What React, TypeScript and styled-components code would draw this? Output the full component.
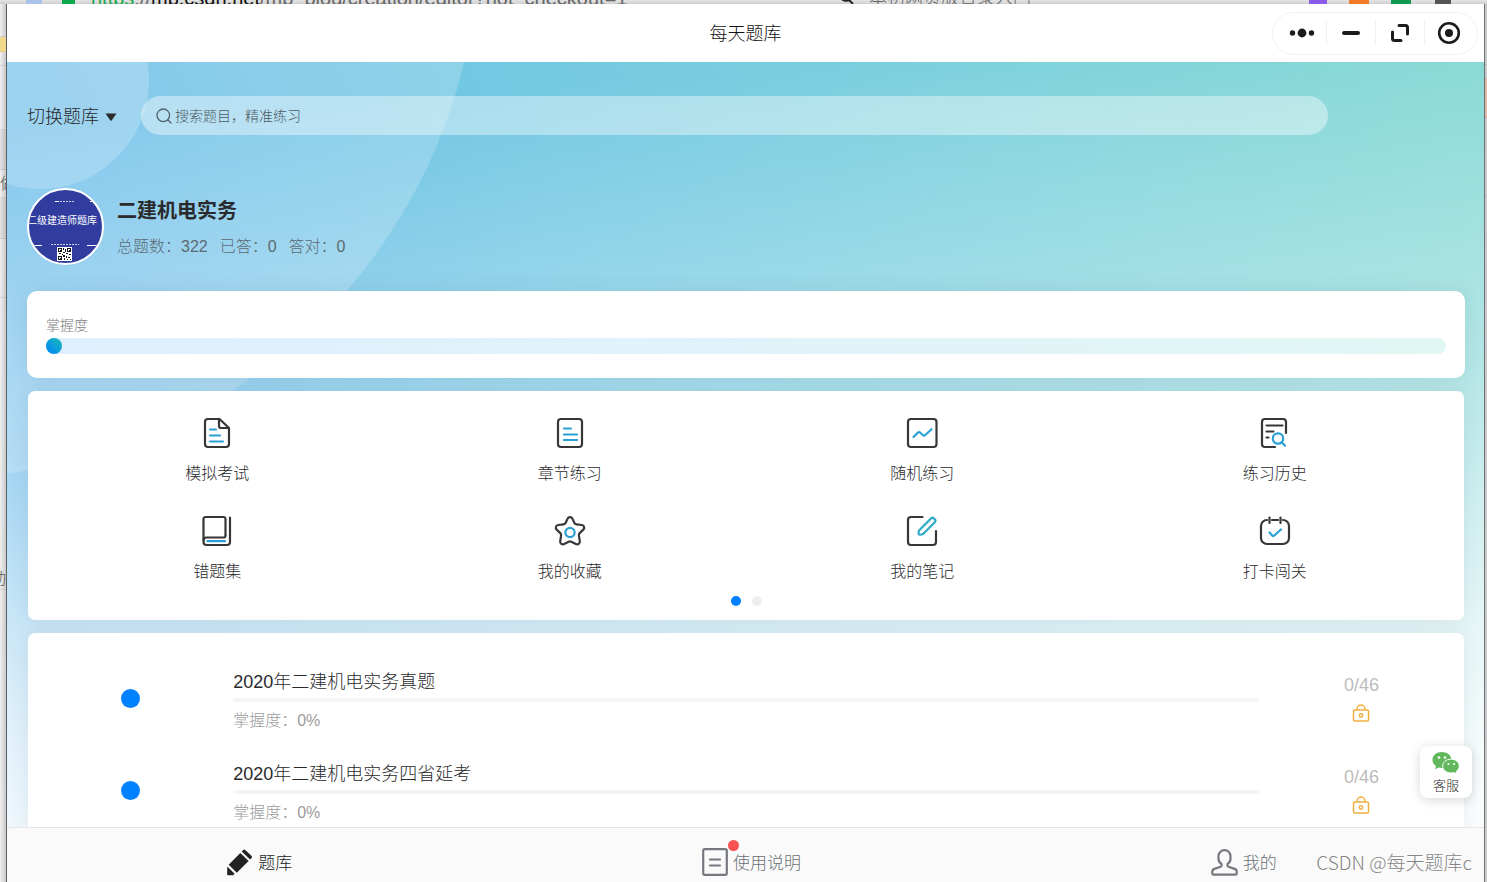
import React from "react";
import styled, { createGlobalStyle } from "styled-components";

const Global = createGlobalStyle`
  * { box-sizing: border-box; }
  body {
    margin: 0;
    font-family: "Liberation Sans", "Noto Sans CJK SC", sans-serif;
    font-weight: 300;
    color: #2a2a2c;
  }
  button { border: 0; background: none; padding: 0; margin: 0; font: inherit; color: inherit; cursor: pointer; }
  a { color: inherit; text-decoration: none; }
  svg { display: block; flex: none; }
  h1, h2, h3, p, ul { margin: 0; padding: 0; font-weight: inherit; }
  ul { list-style: none; }
`;

/* ---------- desktop behind the window ---------- */

const Desktop = styled.div`
  height: 100vh;
  display: grid;
  grid-template: 4px minmax(0, 1fr) / 7px minmax(0, 1fr) 3px;
  background: #e9e9e9;
`;

const BrowserStrip = styled.div`
  grid-column: 1 / -1;
  height: 4px;
  overflow: hidden;
  display: flex;
  align-items: flex-end;
  background: linear-gradient(#e4e4e4, #cfcfcf);
  line-height: 12px;
  font-size: 20px;
  color: #666;
  white-space: nowrap;
`;

const StripBlock = styled.span<{ $w: number; $c: string; $ml: number }>`
  flex: none;
  width: ${(p) => p.$w}px;
  height: 4px;
  margin-left: ${(p) => p.$ml}px;
  background: ${(p) => p.$c};
`;

const Address = styled.span`
  margin-left: 16px;
  width: 748px;
  flex: none;
  b { font-weight: 400; color: #111; }
  i { font-style: normal; color: #18a84c; }
`;

const Query = styled.span`
  width: 398px;
  margin-left: 14px;
  flex: none;
  font-size: 18px;
`;

const LeftEdge = styled.div`
  overflow: hidden;
  border-right: 1px solid #5c6064;
  background: linear-gradient(90deg, #f0f0f0, #c9c9c9);
`;

const RightEdge = styled.div`
  overflow: hidden;
  border-left: 1px solid #6d7072;
  background: #cacaca;
`;

const EdgePiece = styled.div<{ $h: number; $c?: string; $end?: boolean }>`
  height: ${(p) => p.$h}px;
  background: ${(p) => p.$c ?? "transparent"};
  border-bottom: 1px solid rgba(0, 0, 0, 0.08);
  overflow: hidden;
  display: flex;
  align-items: ${(p) => (p.$end ? "flex-end" : "center")};
  justify-content: ${(p) => (p.$end ? "flex-end" : "flex-start")};
  font-size: 16px;
  line-height: 20px;
  color: #555;
`;

/* ---------- window ---------- */

const Window = styled.div`
  display: flex;
  flex-direction: column;
  min-width: 0;
  min-height: 0;
  background: #fff;
`;

const TitleBar = styled.header`
  height: 58px;
  flex: none;
  display: grid;
  grid-template-columns: 1fr auto 1fr;
  align-items: center;
  padding: 0 6px;
  background: #fff;
`;

const AppTitle = styled.h1`
  grid-column: 2;
  padding-top: 2px;
  font-size: 18px;
  line-height: 26px;
  color: #111;
`;

const Capsule = styled.div`
  justify-self: end;
  display: flex;
  align-items: center;
  height: 43px;
  padding: 0 4px;
  border: 1px solid #f1f1f1;
  border-radius: 22px;
`;

const CapsuleButton = styled.button`
  width: 49px;
  height: 24px;
  display: flex;
  align-items: center;
  justify-content: center;
  & + & { border-left: 1px solid #efefef; }
`;

const Stage = styled.div`
  position: relative;
  flex: 1;
  min-height: 0;
  overflow: hidden;
  display: flex;
  isolation: isolate;
  background:
    linear-gradient(176deg,
      rgba(255, 255, 255, 0) 7%, rgba(255, 255, 255, 0.26) 31%,
      rgba(255, 255, 255, 0.4) 46%, rgba(255, 255, 255, 0.6) 60%,
      rgba(255, 255, 255, 0.8) 76%, rgba(255, 255, 255, 0.97) 95%),
    linear-gradient(65deg, #62b6ea 0%, #66bbe9 20%, #73c8e3 45%, #7dd2db 75%, #84d8d4 100%);
`;

const Content = styled.main`
  flex: 1;
  min-width: 0;
  display: flex;
  flex-direction: column;
  padding: 34px 19px 0 20px;
  overflow-y: auto;
  scrollbar-width: none;
  & > * { flex: none; }
`;

const Bubble = styled.span<{ $x: number; $y: number; $r: number }>`
  position: absolute;
  z-index: -1;
  left: ${(p) => p.$x - p.$r}px;
  top: ${(p) => p.$y - p.$r}px;
  width: ${(p) => p.$r * 2}px;
  height: ${(p) => p.$r * 2}px;
  border-radius: 50%;
  background: rgba(255, 255, 255, 0.2);
`;

const SearchRow = styled.div`
  display: flex;
  align-items: center;
  gap: 24px;
  padding-right: 137px;
`;

const BankSwitch = styled.button`
  display: flex;
  align-items: center;
  gap: 6px;
  padding-top: 2px;
  font-size: 18px;
  line-height: 26px;
  white-space: nowrap;
`;

const SearchBox = styled.label`
  flex: 1;
  height: 39px;
  display: flex;
  align-items: center;
  gap: 3px;
  padding: 0 15px;
  border-radius: 20px;
  background: rgba(255, 255, 255, 0.4);
  color: #52626a;
`;

const SearchInput = styled.input`
  flex: 1;
  min-width: 0;
  border: 0;
  padding: 0;
  outline: 0;
  background: transparent;
  font: inherit;
  font-size: 14px;
  line-height: 20px;
  color: #333;
  &::placeholder { color: #4c5a62; opacity: 1; }
`;

const Profile = styled.section`
  display: flex;
  align-items: center;
  gap: 13px;
  margin: 53px 0 26px;
`;

const Avatar = styled.div`
  width: 77px;
  height: 77px;
  border: 2px solid #fff;
  border-radius: 50%;
  overflow: hidden;
  background: #303d9f;
`;

const ProfileText = styled.div`
  display: flex;
  flex-direction: column;
  gap: 10px;
  padding-top: 2px;
`;

const BankName = styled.h2`
  font-size: 20px;
  line-height: 28px;
  font-weight: 700;
`;

const Stats = styled.p`
  display: flex;
  gap: 12px;
  font-size: 16px;
  line-height: 24px;
  color: #5c6a72;
`;

const Card = styled.section`
  background: #fff;
  border-radius: 7px;
  box-shadow: 0 0 20px rgba(40, 80, 110, 0.1);
  margin: 0 1px 13px;
`;

const MasteryCard = styled(Card)`
  margin: 0 0 13px;
  padding: 24px 19px;
  border-radius: 10px;
`;

const MasteryLabel = styled.p`
  font-size: 14px;
  line-height: 20px;
  margin-bottom: 3px;
  color: #7c7c7c;
`;

const MasteryTrack = styled.div`
  height: 16px;
  border-radius: 8px;
  background: linear-gradient(90deg, #e0efff, #e1f7f4);
`;

const MasteryFill = styled.div`
  width: 16px;
  height: 16px;
  border-radius: 8px;
  background: linear-gradient(45deg, #0081ff, #1cbbb4);
`;

const MenuCard = styled(Card)`
  padding: 26px 13px 14px;
`;

const MenuGrid = styled.nav`
  display: grid;
  grid-template-columns: repeat(4, 1fr);
  row-gap: 29px;
`;

const MenuItem = styled.a`
  display: flex;
  flex-direction: column;
  align-items: center;
  gap: 13px;
  font-size: 16px;
  line-height: 24px;
`;

const Pager = styled.div`
  display: flex;
  justify-content: center;
  gap: 11px;
  margin-top: 12px;
`;

const PagerDot = styled.button<{ $on?: boolean }>`
  width: 10px;
  height: 10px;
  border-radius: 5px;
  background: ${(p) => (p.$on ? "#0081ff" : "#eee")};
`;

const ListCard = styled(Card)`
  flex: 1 0 auto;
  margin-bottom: 0;
  padding-top: 19px;
  border-radius: 7px 7px 0 0;
`;

const PaperRow = styled.li`
  height: 92px;
  display: grid;
  grid-template-columns: 1fr 5fr 1fr;
  align-items: center;
`;

const Bullet = styled.span`
  justify-self: center;
  width: 19px;
  height: 19px;
  border-radius: 50%;
  background: #0081ff;
`;

const PaperBody = styled.div`
  padding-top: 5px;
`;

const PaperTitle = styled.h3`
  font-size: 18px;
  line-height: 28px;
`;

const PaperTrack = styled.div`
  height: 4px;
  margin: 2px 0 7px;
  border-radius: 2px;
  background: #f5f5f5;
`;

const PaperMastery = styled.p`
  font-size: 16px;
  line-height: 24px;
  color: #9c9c9c;
`;

const PaperSide = styled.div`
  display: flex;
  flex-direction: column;
  align-items: center;
  gap: 9px;
  font-size: 18px;
  line-height: 20px;
  color: #bbb;
`;

const Support = styled.button`
  position: absolute;
  right: 12px;
  bottom: 29px;
  width: 52px;
  height: 52px;
  display: flex;
  flex-direction: column;
  align-items: center;
  gap: 2px;
  padding-top: 6px;
  border-radius: 8px;
  background: #fff;
  box-shadow: 0 2px 12px rgba(0, 0, 0, 0.16);
  font-size: 13px;
  line-height: 20px;
`;

const TabBar = styled.nav`
  position: relative;
  flex: none;
  height: 55px;
  display: grid;
  grid-template-columns: repeat(3, 1fr);
  padding-top: 16px;
  border-top: 1px solid #e6e6e8;
  background: #fafafa;
`;

const Tab = styled.a<{ $on?: boolean }>`
  height: 36px;
  display: flex;
  align-items: center;
  justify-content: center;
  gap: 5px;
  padding-left: 12px;
  font-size: 17px;
  line-height: 24px;
  color: ${(p) => (p.$on ? "#222" : "#6c7076")};
`;

const TabLabel = styled.span`
  padding-top: 4px;
`;

const TabIcon = styled.span`
  position: relative;
`;

const Badge = styled.span`
  position: absolute;
  top: -8px;
  right: -11px;
  width: 11px;
  height: 11px;
  border-radius: 50%;
  background: #fa5151;
`;

const Watermark = styled.span`
  position: absolute;
  right: 12px;
  bottom: 6px;
  font-family: "Noto Sans CJK SC", sans-serif;
  font-size: 19px;
  line-height: 28px;
  color: #858585;
  text-shadow: 1px 1px 0 #fff;
`;

/* ---------- icons ---------- */

const INK = "#37373a";
const BLUE = "#2a9fd6";

const MenuSvg = ({ children }: { children: React.ReactNode }) => (
  <svg width="32" height="32" viewBox="0 0 32 32" fill="none" stroke={INK} strokeWidth="2.2" strokeLinecap="round" strokeLinejoin="round" aria-hidden="true">
    {children}
  </svg>
);

const menu: { label: string; icon: React.ReactNode }[] = [
  {
    label: "模拟考试",
    icon: (
      <MenuSvg>
        <path d="M18.500 2H7a3 3 0 0 0-3 3v22a3 3 0 0 0 3 3h18a3 3 0 0 0 3-3V11z" />
        <path d="M18 2.500V9a2 2 0 0 0 2 2h7.500" />
        <path stroke={BLUE} d="M9 12.500h6M9 18.500h10M9 24.500h13" />
      </MenuSvg>
    ),
  },
  {
    label: "章节练习",
    icon: (
      <MenuSvg>
        <rect x="4" y="2" width="24" height="28" rx="3" />
        <path stroke={BLUE} d="M10 11.500h7M10 17.500h13M10 23h13" />
      </MenuSvg>
    ),
  },
  {
    label: "随机练习",
    icon: (
      <MenuSvg>
        <rect x="2" y="2" width="28.500" height="28" rx="3" />
        <path stroke={BLUE} d="M7.500 20l4.500-4.500a1.500 1.500 0 0 1 2 0l3 2.700a1.500 1.500 0 0 0 2 0l6.500-6" />
      </MenuSvg>
    ),
  },
  {
    label: "练习历史",
    icon: (
      <MenuSvg>
        <path d="M16 30H6a3 3 0 0 1-3-3V5a3 3 0 0 1 3-3h18a3 3 0 0 1 3 3v11" />
        <path d="M7.500 8.500h16M7.500 14.500h7M7.500 20.500h2" />
        <circle cx="19" cy="21.500" r="5.200" stroke={BLUE} />
        <path stroke={BLUE} d="M22.500 25l3.500 3.700" />
      </MenuSvg>
    ),
  },
  {
    label: "错题集",
    icon: (
      <MenuSvg>
        <path d="M24.500 20V4a2 2 0 0 0-2-2H4.500a2 2 0 0 0-2 2v23a3 3 0 0 0 3 3H26a3 3 0 0 0 3-3V2.500" />
        <path d="M2.500 25a3 3 0 0 1 3-2.500h17a2 2 0 0 0 2-2" />
        <path stroke={BLUE} d="M6.500 26.200h17.500" />
      </MenuSvg>
    ),
  },
  {
    label: "我的收藏",
    icon: (
      <MenuSvg>
        <path d="M13.600 3.600c1-2.100 3.800-2.100 4.800 0l1.900 4.200c.4.900 1.200 1.500 2.200 1.600l5.300.6c2.300.3 3.200 3 1.500 4.600l-3.600 3.500c-.7.700-1 1.600-.8 2.500l.9 5.600c.4 2.300-1.900 3.900-3.900 2.900l-4.600-2.400c-.8-.4-1.800-.4-2.600 0l-4.600 2.400c-2 1-4.300-.6-3.900-2.900l.9-5.600c.2-.9-.1-1.800-.8-2.500l-3.600-3.500C1 13 1.900 10.300 4.200 10l5.300-.6c1-.1 1.800-.7 2.200-1.600z" />
        <circle cx="16" cy="17.500" r="4.600" stroke={BLUE} />
      </MenuSvg>
    ),
  },
  {
    label: "我的笔记",
    icon: (
      <MenuSvg>
        <path d="M16.500 2H5a3 3 0 0 0-3 3V27a3 3 0 0 0 3 3h22a3 3 0 0 0 3-3V16" />
        <path stroke="#2fa9c8" d="M14 14.500L25 3.400a2 2 0 0 1 2.800 0l1 1a2 2 0 0 1 0 2.800L17.600 18.500c-.6.6-1.300.9-2.100 1l-1.500.1c-1 .1-1.700-.6-1.500-1.600l.2-1.400c.1-.8.600-1.500 1.300-2.100z" />
      </MenuSvg>
    ),
  },
  {
    label: "打卡闯关",
    icon: (
      <MenuSvg>
        <path d="M8 5a6 6 0 0 0-6 6v12a6 6 0 0 0 6 6h16a6 6 0 0 0 6-6V11a6 6 0 0 0-6-6M13 5h6M10.500 2.500v5.500M21.500 2.500v5.500" />
        <path stroke={BLUE} d="M10.500 17.500l3 3.200c.5.400 1 .4 1.500 0l7-6.200" />
      </MenuSvg>
    ),
  },
];

const LockIcon = () => (
  <svg width="18" height="18" viewBox="0 0 18 18" fill="none" stroke="#f0b040" strokeWidth="1.500" aria-hidden="true">
    <rect x="1.500" y="6" width="15" height="11" rx="1.200" />
    <path d="M5 6V5a4 4 0 0 1 8 0v1" />
    <circle cx="9" cy="11.500" r="1.700" />
  </svg>
);

const AvatarArt = () => (
  <svg width="73" height="73" viewBox="0 0 73 73" role="img" aria-label="二级建造师题库">
    <text x="-2" y="34" fontSize="10" fill="#fff" fontWeight="400">二级建造师题库</text>
    <path stroke="#fff" strokeWidth="1" fill="none" d="M0 55.500h13M58 55.500h14M26 11.500h4M61 11.500h4" />
    <path stroke="#c9cdf0" strokeWidth="1" strokeDasharray="2 1" fill="none" d="M31 11.500h15M22 54.500h28" />
    <rect x="28" y="57" width="15" height="14" fill="#fff" />
    <path
      fill="#15151c"
      d="M29 58h4v4h-4zM38 58h4v4h-4zM29 66h4v4h-4zM34 58h1v2h-1zM36 59h1v3h-1zM34 62h2v1h-2zM30 63h2v1h-2zM37 63h2v1h-2zM40 64h2v1h-2zM34 65h2v2h-2zM37 66h1v2h-1zM39 67h2v1h-2zM35 68h1v2h-1zM38 69h1v1h-1zM41 69h1v1h-1zM33 64h1v1h-1z"
    />
    <path fill="#fff" d="M30 59h2v2h-2zM39 59h2v2h-2zM30 67h2v2h-2z" />
    <path fill="#15151c" d="M31 60h1v1h-1zM40 60h1v1h-1zM31 68h1v1h-1z" />
  </svg>
);

const WechatIcon = () => (
  <svg width="28" height="22" viewBox="0 0 28 22" aria-hidden="true">
    <path fill="#62b85c" d="M10 0C4.500 0 .5 3.500.5 8c0 2.600 1.400 4.800 3.500 6.200L3 17.300l3.600-1.900c1.100.3 2.200.5 3.400.5C15.500 15.900 19.500 12.400 19.500 8S15.500 0 10 0z" />
    <path fill="#62b85c" stroke="#fff" strokeWidth="1" d="M19 7.200c-4.800 0-8.300 3-8.300 6.900s3.500 6.900 8.300 6.900c1 0 2-.1 2.900-.4l3.100 1.400-.8-2.500c1.900-1.300 3.100-3.200 3.100-5.400 0-3.900-3.500-6.900-8.300-6.900z" />
    <g fill="#fff">
      <circle cx="7" cy="5.500" r="1.300" />
      <circle cx="13" cy="5.500" r="1.300" />
      <circle cx="16.500" cy="12" r="1.100" />
      <circle cx="22" cy="12" r="1.100" />
    </g>
  </svg>
);

const papers = [
  { title: "2020年二建机电实务真题", mastery: 0, done: 0, total: 46 },
  { title: "2020年二建机电实务四省延考", mastery: 0, done: 0, total: 46 },
];

export default function App() {
  return (
    <>
      <Global />
      <Desktop>
        <BrowserStrip>
          <StripBlock $w={16} $c="#a9c3ea" $ml={26} />
          <StripBlock $w={13} $c="#0da84e" $ml={20} />
          <Address>
            <i>https</i>://<b>mp.csdn.net</b>/mp_blog/creation/editor?not_checkout=1
          </Address>
          <svg width="16" height="4" viewBox="0 0 16 4" fill="none" stroke="#222" strokeWidth="2">
            <path d="M2 -2a6 6 0 0 0 8 2l4 4" />
          </svg>
          <Query>本初网页版合录入门</Query>
          <StripBlock $w={18} $c="#8a5be8" $ml={42} />
          <StripBlock $w={20} $c="#f27b2a" $ml={22} />
          <StripBlock $w={20} $c="#0f9a50" $ml={22} />
          <StripBlock $w={16} $c="#555" $ml={24} />
        </BrowserStrip>

        <LeftEdge aria-hidden="true">
          <EdgePiece $h={33} />
          <EdgePiece $h={15} $c="#f3d98c" />
          <EdgePiece $h={14} />
          <EdgePiece $h={64} />
          <EdgePiece $h={40} $c="rgba(0,0,0,0.05)" />
          <EdgePiece $h={28}>做</EdgePiece>
          <EdgePiece $h={41} $c="rgba(0,0,0,0.05)" />
          <EdgePiece $h={59} />
          <EdgePiece $h={292} $end>动</EdgePiece>
        </LeftEdge>

        <Window>
          <TitleBar>
            <AppTitle>每天题库</AppTitle>
            <Capsule>
              <CapsuleButton aria-label="更多">
                <svg width="26" height="10" viewBox="0 0 26 10" fill="#1b1b1b">
                  <circle cx="3.500" cy="5" r="2.700" />
                  <circle cx="13" cy="5" r="4.400" />
                  <circle cx="22.500" cy="5" r="2.700" />
                </svg>
              </CapsuleButton>
              <CapsuleButton aria-label="最小化">
                <svg width="20" height="4" viewBox="0 0 20 4">
                  <rect x="1" width="18" height="4" rx="2" fill="#1b1b1b" />
                </svg>
              </CapsuleButton>
              <CapsuleButton aria-label="最大化">
                <svg width="20" height="20" viewBox="0 0 20 20" fill="none" stroke="#1b1b1b" strokeWidth="3" strokeLinecap="round" strokeLinejoin="round">
                  <path d="M9 2.500h6.500a2 2 0 0 1 2 2V11M2.500 9v6.500a2 2 0 0 0 2 2H11" />
                </svg>
              </CapsuleButton>
              <CapsuleButton aria-label="关闭">
                <svg width="24" height="24" viewBox="0 0 24 24">
                  <circle cx="12" cy="12" r="9.800" fill="none" stroke="#1b1b1b" strokeWidth="2.600" />
                  <circle cx="12" cy="12" r="4" fill="#1b1b1b" />
                </svg>
              </CapsuleButton>
            </Capsule>
          </TitleBar>

          <Stage>
            <Bubble $x={-70} $y={-126} $r={542} />
            <Bubble $x={33} $y={18} $r={109} />
            <Content>
              <SearchRow>
                <BankSwitch>
                  切换题库
                  <svg width="12" height="8" viewBox="0 0 12 8" fill="#2c2c2c">
                    <path d="M0.500 0.500h11L6.600 7.500a.8.8 0 0 1-1.200 0z" />
                  </svg>
                </BankSwitch>
                <SearchBox>
                  <svg width="16" height="16" viewBox="0 0 16 16" fill="none" stroke="currentColor" strokeWidth="1.300" strokeLinecap="round">
                    <circle cx="7.300" cy="7.300" r="6.300" />
                    <path d="M12 12l3 3" />
                  </svg>
                  <SearchInput type="search" aria-label="搜索题目" placeholder="搜索题目，精准练习" />
                </SearchBox>
              </SearchRow>

              <Profile>
                <Avatar>
                  <AvatarArt />
                </Avatar>
                <ProfileText>
                  <BankName>二建机电实务</BankName>
                  <Stats>
                    <span>总题数：322</span>
                    <span>已答：0</span>
                    <span>答对：0</span>
                  </Stats>
                </ProfileText>
              </Profile>

              <MasteryCard>
                <MasteryLabel id="mastery">掌握度</MasteryLabel>
                <MasteryTrack role="progressbar" aria-labelledby="mastery" aria-valuenow={0}>
                  <MasteryFill />
                </MasteryTrack>
              </MasteryCard>

              <MenuCard>
                <MenuGrid>
                  {menu.map((m) => (
                    <MenuItem href="#" key={m.label}>
                      {m.icon}
                      <span>{m.label}</span>
                    </MenuItem>
                  ))}
                </MenuGrid>
                <Pager>
                  <PagerDot $on aria-label="第1页" />
                  <PagerDot aria-label="第2页" />
                </Pager>
              </MenuCard>

              <ListCard>
                <ul>
                  {papers.map((p) => (
                    <PaperRow key={p.title}>
                      <Bullet />
                      <PaperBody>
                        <PaperTitle>{p.title}</PaperTitle>
                        <PaperTrack />
                        <PaperMastery>掌握度：{p.mastery}%</PaperMastery>
                      </PaperBody>
                      <PaperSide>
                        <span>{p.done}/{p.total}</span>
                        <LockIcon />
                      </PaperSide>
                    </PaperRow>
                  ))}
                </ul>
              </ListCard>
            </Content>

            <Support>
              <WechatIcon />
              客服
            </Support>
          </Stage>

          <TabBar>
            <Tab href="#" $on>
              <svg width="27" height="27" viewBox="0 0 27 27" fill="#222">
                <path d="M17 1.200a1.800 1.800 0 0 1 2.500 0l5.900 5.600a1.800 1.800 0 0 1 0 2.500l-1.300 1.300-8.400-8z" />
                <path d="M14.300 4l8.300 8L10.800 23.700 2.700 15.700z" />
                <path d="M1.300 17.600l7.300 7.200-1.600 1.400H2.300a1.200 1.200 0 0 1-1.200-1.200z" />
              </svg>
              <TabLabel>题库</TabLabel>
            </Tab>
            <Tab href="#">
              <TabIcon>
                <svg width="26" height="28" viewBox="0 0 26 28" fill="none" stroke="#75797f" strokeWidth="2.200" strokeLinecap="round">
                  <rect x="1.200" y="1.200" width="23.600" height="25.600" rx="1.500" />
                  <path d="M8 11.500h10M8 17.500h10" />
                </svg>
                <Badge />
              </TabIcon>
              <TabLabel>使用说明</TabLabel>
            </Tab>
            <Tab href="#">
              <svg width="27" height="27" viewBox="0 0 27 27" fill="none" stroke="#75797f" strokeWidth="2.200" strokeLinejoin="round">
                <path d="M13.500 1.200a6 6 0 0 0-6 6.200v2c0 2.600 1.300 4.500 3 5.600v1.600c0 .6-.4 1-.9 1.200l-6.200 2.100a3 3 0 0 0-2.100 2.900v1.600a1.200 1.200 0 0 0 1.200 1.200h22a1.200 1.200 0 0 0 1.200-1.200v-1.600a3 3 0 0 0-2.100-2.900l-6.200-2.100c-.5-.2-.9-.6-.9-1.200V15c1.700-1.100 3-3 3-5.600v-2a6 6 0 0 0-6-6.200z" />
              </svg>
              <TabLabel>我的</TabLabel>
            </Tab>
            <Watermark>CSDN @每天题库c</Watermark>
          </TabBar>
        </Window>

        <RightEdge aria-hidden="true">
          <EdgePiece $h={61} />
          <EdgePiece $h={14} />
          <EdgePiece $h={39} $c="#e0b8a4" />
          <EdgePiece $h={78} />
        </RightEdge>
      </Desktop>
    </>
  );
}
